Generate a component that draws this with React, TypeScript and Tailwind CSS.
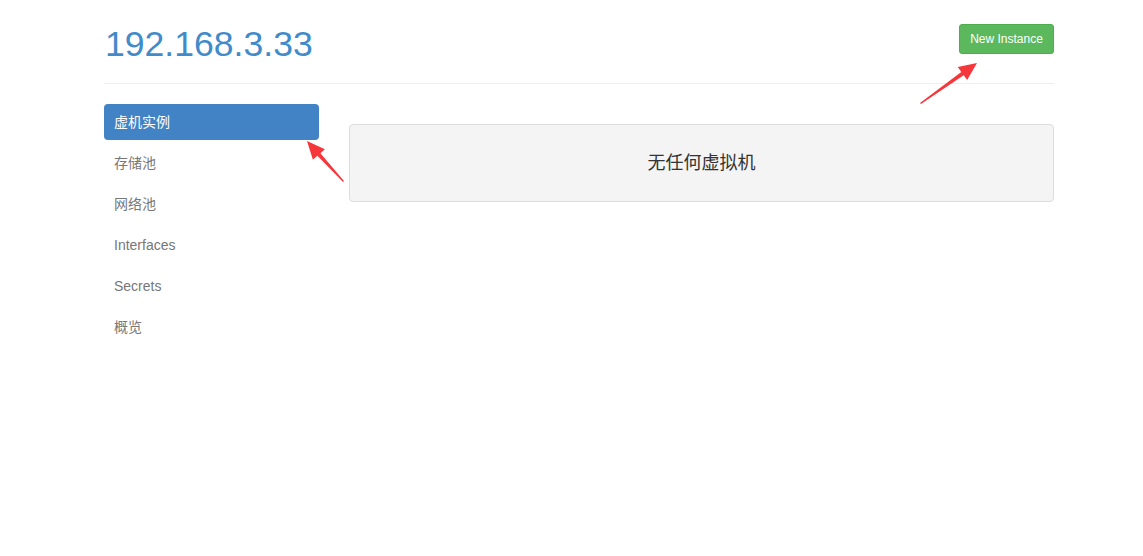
import React from "react";

const menu = ["虚机实例", "存储池", "网络池", "Interfaces", "Secrets", "概览"];

function Arrows() {
  // annotation arrows drawn over the page
  return (
    <svg className="pointer-events-none absolute left-0 top-0" width="1143" height="556">
      <polygon
        fill="#f5373b"
        points="921,104 963.7,75.2 967.2,80.1 977,63 957.8,67.1 961.3,72 920,103"
      />
      <polygon
        fill="#f5373b"
        points="343,182 317.4,155.8 312.9,159.7 307,141 324.9,149.3 320.4,153.2 344,181"
      />
    </svg>
  );
}

export default function App() {
  return (
    <div
      className="relative min-h-[556px] w-full bg-white text-[14px] text-[#333]"
      style={{ fontFamily: '"Liberation Sans", Arial, "Noto Sans CJK SC", sans-serif' }}
    >
      <div className="ml-[104px] w-[950px]">
        {/* Header */}
        <div className="flex items-start justify-between border-b border-[#eeeeee] pt-[24px] pb-[19px]">
          <h1 className="h-[40px] pl-[1px] text-[35.6px] leading-[40px] text-[#428bca]">192.168.3.33</h1>
          <button className="h-[30px] w-[95px] rounded-[3px] border border-[#4cae4c] bg-[#5cb85c] text-[12px] text-white">
            New Instance
          </button>
        </div>

        {/* Body */}
        <div className="mt-[20px] flex gap-[30px]">
          <ul className="flex w-[215px] flex-col gap-[5px]">
            {menu.map((m, i) => (
              <li
                key={m}
                className={`flex h-[36px] items-center rounded-[4px] px-[10px] ${
                  i === 0 ? "bg-[#4183c4] text-white" : "text-[#777]"
                }`}
              >
                {m}
              </li>
            ))}
          </ul>
          <div className="mt-[20px] flex h-[78px] flex-1 items-center justify-center rounded-[4px] border border-[#dddddd] bg-[#f4f4f4] text-[18px] text-[#333]">
            无任何虚拟机
          </div>
        </div>
      </div>
      <Arrows />
    </div>
  );
}
